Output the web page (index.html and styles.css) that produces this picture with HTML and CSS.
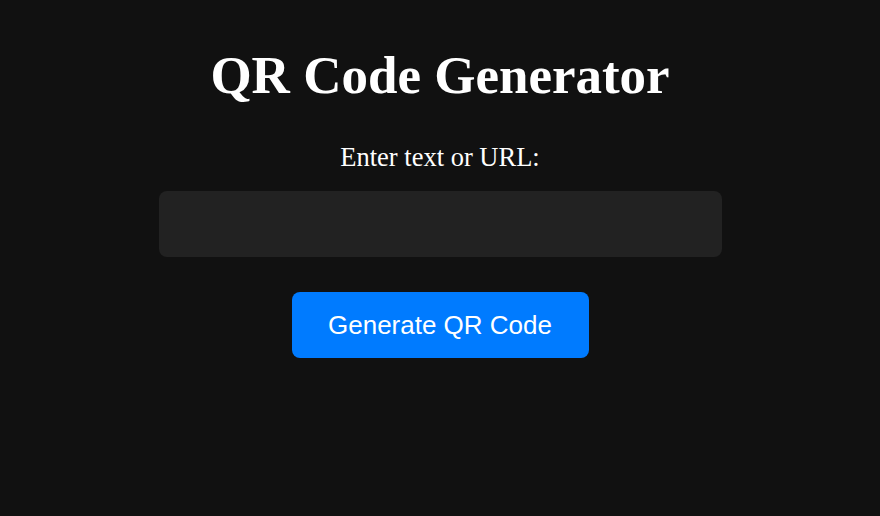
FILE: index.html
```html
<!DOCTYPE html>
<html>
<head>
<meta charset="utf-8">
<link rel="stylesheet" href="styles.css">
</head>
<body>
<main class="app">
  <h1 class="title">QR Code Generator</h1>
  <label class="label" for="qr-input">Enter text or URL:</label>
  <input id="qr-input" class="input" type="text">
  <button class="btn" type="button">Generate QR Code</button>
</main>
</body>
</html>
```
FILE: styles.css
```css
html, body {
  margin: 0;
  padding: 0;
  background: #111111;
  color: #ffffff;
  font-family: "Liberation Serif", "Times New Roman", serif;
}
.app {
  display: flex;
  flex-direction: column;
  align-items: center;
  padding-top: 45px;
}
.title {
  margin: 0;
  font-size: 53px;
  font-weight: bold;
  line-height: 60px;
}
.label {
  margin-top: 37px;
  font-size: 26.5px;
  line-height: 30px;
}
.input {
  box-sizing: border-box;
  margin-top: 19px;
  width: 563px;
  height: 66px;
  background: #222222;
  border: none;
  border-radius: 8px;
  color: #fff;
  font-size: 24px;
  padding: 0 16px;
}
.btn {
  margin-top: 35px;
  width: 297px;
  height: 66px;
  background: #007bff;
  color: #ffffff;
  border: none;
  border-radius: 8px;
  font-family: "Liberation Sans", Arial, sans-serif;
  font-size: 26px;
}
```
